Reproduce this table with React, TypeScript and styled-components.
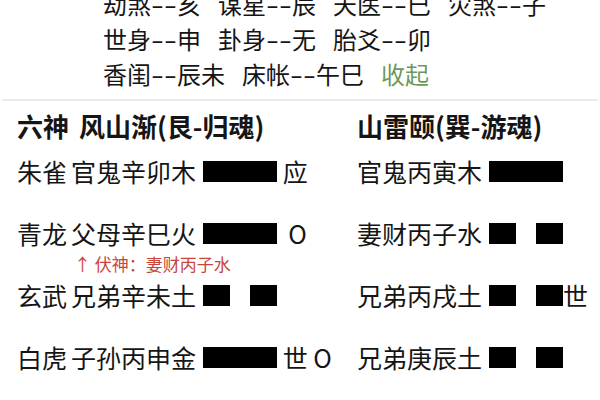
import React from 'react';
import styled, { createGlobalStyle } from 'styled-components';

const Global = createGlobalStyle`
  html, body { margin: 0; padding: 0; background: #ffffff; overflow: hidden; }
  body { font-family: "Noto Sans CJK SC", "Noto Sans", sans-serif; color: #151515; }
`;

const Page = styled.div`
  width: 600px;
  height: 400px;
  overflow: hidden;
  background: #fff;
`;

const ShenSha = styled.div`
  margin-top: -14px;
  padding-left: 103px;
  font-size: 24px;
  line-height: 35px;
`;

const ShenShaLine = styled.div`
  display: flex;
  column-gap: 17px;
  white-space: nowrap;
`;

const Item = styled.span`
  display: inline-flex;
  align-items: baseline;
`;

const Dash = styled.span`
  display: inline-block;
  width: 26px;
  text-align: center;
  transform: scaleX(1.55);
`;

const Collapse = styled.span`
  color: #6a9a5c;
`;

const Divider = styled.div`
  height: 2px;
  margin: 8px 2px 0;
  background: #ebebeb;
`;

const Header = styled.div`
  display: grid;
  grid-template-columns: 340px 1fr;
  padding: 8px 0 8px 17px;
  font-size: 26px;
  font-weight: 700;
  line-height: 34px;
  white-space: nowrap;
`;

const HeaderLeft = styled.div`
  display: flex;
  column-gap: 10px;
`;

const YaoRow = styled.div`
  display: grid;
  grid-template-columns: 340px 1fr;
  padding-left: 17px;
  height: 62px;
`;

const Cell = styled.div`
  display: flex;
  flex-direction: column;
`;

const Line = styled.div`
  display: flex;
  align-items: center;
  height: 40px;
  font-size: 25px;
  white-space: pre;
`;

const Shen = styled.span`
  margin-right: 4px;
`;

const Bar = styled.div`
  display: flex;
  justify-content: space-between;
  width: 74px;
  height: 21px;
  margin-left: 7px;
`;

const Seg = styled.div<{ $w: number }>`
  width: ${(p) => p.$w}px;
  height: 100%;
  background: #000;
`;

const Mark = styled.span``;

const FuShen = styled.div`
  height: 22px;
  line-height: 22px;
  font-size: 17px;
  color: #c9443c;
  padding-left: 57px;
  white-space: nowrap;
`;

type Yao = { text: string; yang: boolean; mark?: string };

const Gua = ({ y }: { y: Yao }) => (
  <>
    <span>{y.text}</span>
    <Bar>
      {y.yang ? <Seg $w={74} /> : (<><Seg $w={27} /><Seg $w={27} /></>)}
    </Bar>
    {y.mark ? <Mark>{y.mark}</Mark> : null}
  </>
);

const rows: { shen: string; left: Yao; right: Yao; fu?: string }[] = [
  { shen: '朱雀', left: { text: '官鬼辛卯木', yang: true, mark: ' 应' }, right: { text: '官鬼丙寅木', yang: true } },
  { shen: '青龙', left: { text: '父母辛巳火', yang: true, mark: '  O' }, right: { text: '妻财丙子水', yang: false }, fu: '↑ 伏神：妻财丙子水' },
  { shen: '玄武', left: { text: '兄弟辛未土', yang: false }, right: { text: '兄弟丙戌土', yang: false, mark: '世' } },
  { shen: '白虎', left: { text: '子孙丙申金', yang: true, mark: ' 世 O' }, right: { text: '兄弟庚辰土', yang: false } },
  { shen: '螣蛇', left: { text: '父母丙午火', yang: false }, right: { text: '官鬼庚寅木', yang: false } },
  { shen: '勾陈', left: { text: '兄弟丙辰土', yang: false }, right: { text: '妻财庚子水', yang: true } },
];

const shensha = [
  [['劫煞', '亥'], ['谋星', '辰'], ['天医', '巳'], ['灾煞', '子']],
  [['世身', '申'], ['卦身', '无'], ['胎爻', '卯']],
  [['香闺', '辰未'], ['床帐', '午巳']],
];

export default function App() {
  return (
    <Page>
      <Global />
      <ShenSha>
        {shensha.map((line, i) => (
          <ShenShaLine key={i}>
            {line.map(([k, v]) => (
              <Item key={k}>
                {k}
                <Dash>--</Dash>
                {v}
              </Item>
            ))}
            {i === 2 ? <Collapse>收起</Collapse> : null}
          </ShenShaLine>
        ))}
      </ShenSha>
      <Divider />
      <Header>
        <HeaderLeft>
          <span>六神</span>
          <span>风山渐(艮-归魂)</span>
        </HeaderLeft>
        <span>山雷颐(巽-游魂)</span>
      </Header>
      {rows.map((r) => (
        <YaoRow key={r.shen}>
          <Cell>
            <Line>
              <Shen>{r.shen}</Shen>
              <Gua y={r.left} />
            </Line>
            {r.fu ? <FuShen>{r.fu}</FuShen> : null}
          </Cell>
          <Cell>
            <Line>
              <Gua y={r.right} />
            </Line>
          </Cell>
        </YaoRow>
      ))}
    </Page>
  );
}
